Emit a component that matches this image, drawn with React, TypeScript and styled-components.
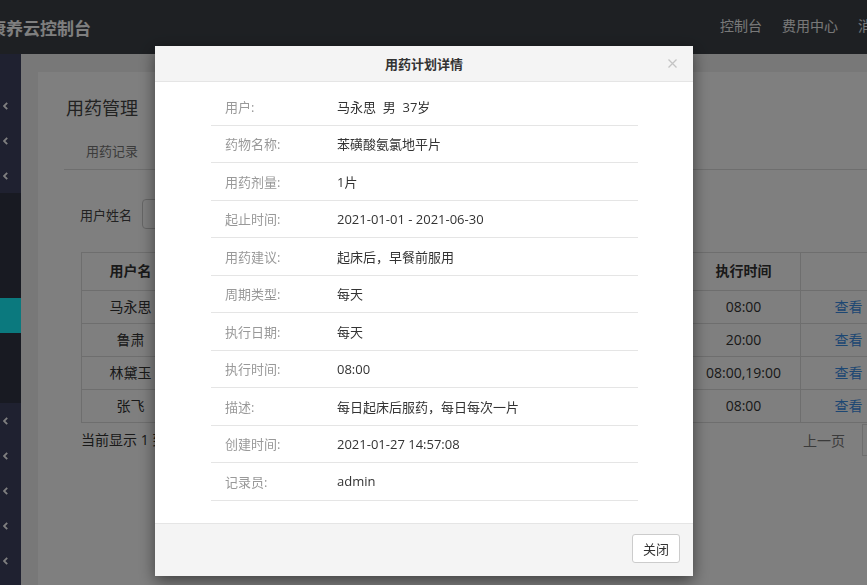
import styled, { createGlobalStyle } from 'styled-components';

const GlobalStyle = createGlobalStyle`
  html, body {
    margin: 0;
    padding: 0;
    width: 100%;
    height: 100%;
    overflow: hidden;
  }
  body {
    font-family: 'Open Sans', 'Noto Sans CJK SC', sans-serif;
    font-size: 14px;
    color: #333;
  }
  #root {
    height: 100%;
  }
`;

interface PlanRow {
  name: string;
  drug: string;
  dose: string;
  range: string;
  cycle: string;
  days: string;
  time: string;
}

const rows: PlanRow[] = [
  { name: '马永思', drug: '苯磺酸氨氯地平片', dose: '1片', range: '2021-01-01 - 2021-06-30', cycle: '每天', days: '每天', time: '08:00' },
  { name: '鲁肃', drug: '二甲双胍缓释片', dose: '2片', range: '2021-01-05 - 2021-04-05', cycle: '每天', days: '每天', time: '20:00' },
  { name: '林黛玉', drug: '阿司匹林肠溶片', dose: '1片', range: '2021-01-10 - 2021-07-10', cycle: '每天', days: '每天', time: '08:00,19:00' },
  { name: '张飞', drug: '硝苯地平控释片', dose: '1片', range: '2021-01-12 - 2021-03-12', cycle: '每天', days: '每天', time: '08:00' },
];

const details: [string, string][] = [
  ['用户:', '马永思\u00a0\u00a0男\u00a0\u00a037岁'],
  ['药物名称:', '苯磺酸氨氯地平片'],
  ['用药剂量:', '1片'],
  ['起止时间:', '2021-01-01 - 2021-06-30'],
  ['用药建议:', '起床后，早餐前服用'],
  ['周期类型:', '每天'],
  ['执行日期:', '每天'],
  ['执行时间:', '08:00'],
  ['描述:', '每日起床后服药，每日每次一片'],
  ['创建时间:', '2021-01-27 14:57:08'],
  ['记录员:', 'admin'],
];

const columnWidths = [98, 100, 80, 187, 70, 70, 114, 96];

const Page = styled.div`
  display: flex;
  flex-direction: column;
  width: 100vw;
  height: 100vh;
  overflow: hidden;
`;

const Header = styled.header`
  flex-shrink: 0;
  height: 54px;
  background: #3c4147;
  display: flex;
  align-items: center;
  overflow: hidden;
`;

const Brand = styled.div`
  margin-left: -11px;
  font-family: 'Noto Sans CJK SC', sans-serif;
  font-size: 17px;
  font-weight: bold;
  color: #fff;
  white-space: nowrap;
  flex-shrink: 0;
`;

const Nav = styled.nav`
  margin-left: auto;
  margin-right: -47px;
  padding-bottom: 4px;
  display: flex;
  gap: 20px;
  flex-shrink: 0;
`;

const NavLink = styled.a`
  font-size: 14px;
  color: #f0f0f0;
  white-space: nowrap;
`;

const Workspace = styled.div`
  flex: 1;
  min-height: 0;
  display: flex;
`;

const Sidebar = styled.aside`
  width: 21px;
  flex-shrink: 0;
  background: #3e4260;
  padding-top: 34px;
  display: flex;
  flex-direction: column;
  overflow: hidden;
`;

const MenuItem = styled.div<{ $active?: boolean }>`
  height: 35px;
  flex-shrink: 0;
  display: flex;
  align-items: center;
  padding-left: 3px;
  background: ${(p) => (p.$active ? '#16f2fc' : 'transparent')};
`;

const SubMenu = styled.div`
  background: #303444;
  display: flex;
  flex-direction: column;
`;

const Main = styled.main`
  flex: 1;
  min-width: 0;
  overflow: hidden;
  background: #f0f0f0;
  padding: 18px 0 0 17px;
  display: flex;
`;

const Card = styled.section`
  width: 900px;
  flex-shrink: 0;
  background: #fff;
  padding: 22px 28px 0;
`;

const CardTitle = styled.h1`
  margin: 0;
  font-size: 18px;
  font-weight: normal;
  line-height: 28px;
  color: #444;
`;

const Tabs = styled.div`
  margin: 10px 0 0 -2px;
  border-bottom: 1px solid #ddd;
  display: flex;
`;

const Tab = styled.span`
  padding: 9px 20px 8px 22px;
  font-size: 13px;
  line-height: 20px;
  color: #777;
`;

const CardBody = styled.div`
  padding: 0 15px;
`;

const SearchRow = styled.div`
  margin-top: 29px;
  display: flex;
  align-items: center;
  gap: 10px;
`;

const SearchLabel = styled.label`
  margin-left: -1px;
  font-size: 13px;
  color: #444;
`;

const SearchInput = styled.input`
  box-sizing: border-box;
  width: 180px;
  height: 30px;
  border: 1px solid #ccc;
  border-radius: 4px;
`;

const Table = styled.table`
  margin-top: 23px;
  width: 815px;
  table-layout: fixed;
  border-collapse: collapse;
  font-size: 14px;
`;

const Th = styled.th`
  border: 1px solid #ddd;
  padding: 8px 8px 9px;
  line-height: 20px;
  font-weight: bold;
  text-align: center;
  white-space: nowrap;
  overflow: hidden;
`;

const Td = styled.td`
  border: 1px solid #ddd;
  padding: 6px 8px;
  line-height: 20px;
  text-align: center;
  white-space: nowrap;
  overflow: hidden;
`;

const ViewLink = styled.a`
  color: #3a8ee6;
`;

const TableFooter = styled.div`
  width: 815px;
  margin-top: 1px;
  display: flex;
  align-items: center;
  justify-content: space-between;
`;

const PageInfo = styled.span`
  font-size: 14px;
  line-height: 20px;
  white-space: nowrap;
`;

const Pager = styled.div`
  display: flex;
  align-items: center;
  gap: 5px;
`;

const PagerText = styled.span`
  padding: 0 12px;
  font-size: 14px;
  color: #777;
`;

const PageBox = styled.span`
  border: 1px solid #ddd;
  padding: 5px 12px;
  line-height: 20px;
  font-size: 14px;
`;

const Backdrop = styled.div`
  position: fixed;
  inset: 0;
  background: rgba(0, 0, 0, 0.5);
  z-index: 10;
`;

const Dialog = styled.div`
  margin: 46px 0 0 155px;
  width: 538px;
  background: #fff;
  box-shadow: 0 5px 15px rgba(0, 0, 0, 0.5);
  display: flex;
  flex-direction: column;
`;

const DialogHeader = styled.div`
  height: 35px;
  padding: 0 16px;
  display: grid;
  grid-template-columns: 1fr auto 1fr;
  align-items: center;
  background: #f4f4f4;
  border-bottom: 1px solid #e5e5e5;
`;

const DialogTitle = styled.h4`
  grid-column: 2;
  margin: 0;
  font-size: 13px;
  font-weight: bold;
  color: #333;
`;

const CloseIcon = styled.button`
  justify-self: end;
  display: flex;
  padding: 0;
  border: 0;
  background: none;
`;

const DialogBody = styled.div`
  padding: 6px 55px 22px 56px;
`;

const DetailRow = styled.div`
  box-sizing: border-box;
  height: 37.5px;
  display: grid;
  grid-template-columns: 126px 1fr;
  align-items: center;
  border-bottom: 1px solid #e5e5e5;
  font-size: 13px;
`;

const DetailLabel = styled.span`
  padding-left: 14px;
  color: #999;
`;

const DetailValue = styled.span`
  color: #333;
`;

const DialogFooter = styled.div`
  padding: 10px 13px 13px;
  display: flex;
  justify-content: flex-end;
  background: #f4f4f4;
  border-top: 1px solid #e5e5e5;
`;

const Button = styled.button`
  height: 29px;
  padding: 0 10px;
  border: 1px solid #ccc;
  border-radius: 3px;
  background: #fff;
  font-family: inherit;
  font-size: 13px;
  color: #333;
`;

function Chevron() {
  return (
    <svg width="5" height="8" viewBox="0 0 5 8">
      <polyline points="4.2,0.8 1,4 4.2,7.2" fill="none" stroke="#fff" strokeWidth="1.8" />
    </svg>
  );
}

export default function App() {
  return (
    <>
      <GlobalStyle />
      <Page>
        <Header>
          <Brand>康养云控制台</Brand>
          <Nav>
            <NavLink>控制台</NavLink>
            <NavLink>费用中心</NavLink>
            <NavLink>消息中心</NavLink>
          </Nav>
        </Header>
        <Workspace>
          <Sidebar>
            {[0, 1, 2].map((i) => (
              <MenuItem key={`a${i}`}>
                <Chevron />
              </MenuItem>
            ))}
            <SubMenu>
              {[0, 1, 2, 3, 4, 5].map((i) => (
                <MenuItem key={`s${i}`} $active={i === 3} />
              ))}
            </SubMenu>
            {[0, 1, 2, 3, 4].map((i) => (
              <MenuItem key={`b${i}`}>
                <Chevron />
              </MenuItem>
            ))}
          </Sidebar>
          <Main>
            <Card>
              <CardTitle>用药管理</CardTitle>
              <Tabs>
                <Tab>用药记录</Tab>
              </Tabs>
              <CardBody>
                <SearchRow>
                  <SearchLabel>用户姓名</SearchLabel>
                  <SearchInput />
                </SearchRow>
                <Table>
                  <colgroup>
                    {columnWidths.map((w, i) => (
                      <col key={i} style={{ width: w }} />
                    ))}
                  </colgroup>
                  <thead>
                    <tr>
                      <Th>用户名</Th>
                      <Th>药物名称</Th>
                      <Th>用药剂量</Th>
                      <Th>起止时间</Th>
                      <Th>周期类型</Th>
                      <Th>执行日期</Th>
                      <Th>执行时间</Th>
                      <Th></Th>
                    </tr>
                  </thead>
                  <tbody>
                    {rows.map((r) => (
                      <tr key={r.name}>
                        <Td>{r.name}</Td>
                        <Td>{r.drug}</Td>
                        <Td>{r.dose}</Td>
                        <Td>{r.range}</Td>
                        <Td>{r.cycle}</Td>
                        <Td>{r.days}</Td>
                        <Td>{r.time}</Td>
                        <Td>
                          <ViewLink>查看</ViewLink>
                        </Td>
                      </tr>
                    ))}
                  </tbody>
                </Table>
                <TableFooter>
                  <PageInfo>当前显示 1 到 4 条，共 4 条记录</PageInfo>
                  <Pager>
                    <PagerText>上一页</PagerText>
                    <PageBox>1</PageBox>
                  </Pager>
                </TableFooter>
              </CardBody>
            </Card>
          </Main>
        </Workspace>
      </Page>

      <Backdrop>
        <Dialog>
          <DialogHeader>
            <DialogTitle>用药计划详情</DialogTitle>
            <CloseIcon aria-label="关闭">
              <svg width="9" height="9" viewBox="0 0 9 9">
                <path d="M0.5 0.5 L8.5 8.5 M8.5 0.5 L0.5 8.5" stroke="#c4c4c4" strokeWidth="1.3" />
              </svg>
            </CloseIcon>
          </DialogHeader>
          <DialogBody>
            {details.map(([label, value]) => (
              <DetailRow key={label}>
                <DetailLabel>{label}</DetailLabel>
                <DetailValue>{value}</DetailValue>
              </DetailRow>
            ))}
          </DialogBody>
          <DialogFooter>
            <Button>关闭</Button>
          </DialogFooter>
        </Dialog>
      </Backdrop>
    </>
  );
}
